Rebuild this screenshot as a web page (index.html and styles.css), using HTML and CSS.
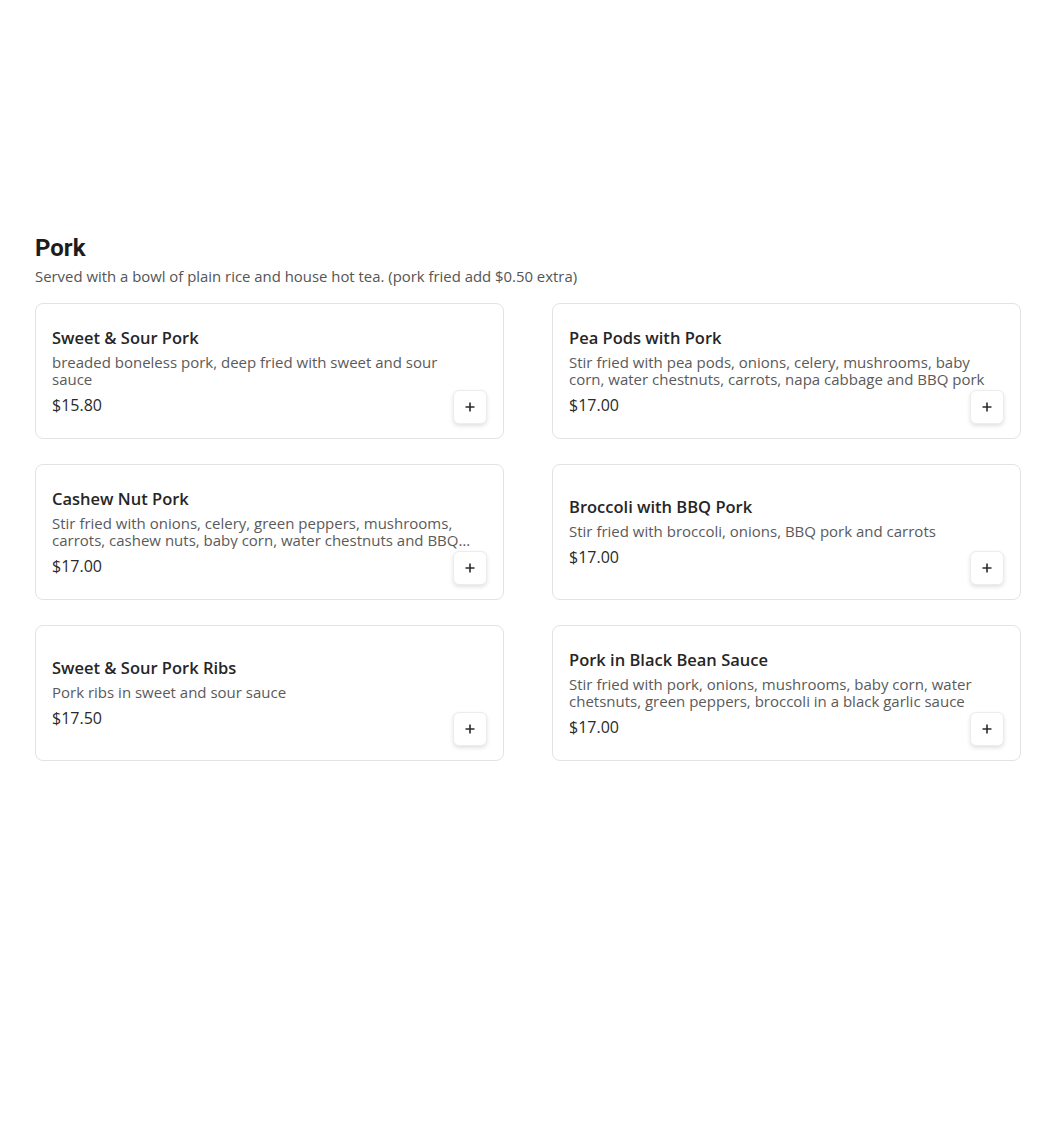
FILE: index.html
```html
<!DOCTYPE html>
<html>
<head>
<meta charset="utf-8">
<link rel="stylesheet" href="styles.css">
</head>
<body>
<section class="menu-section">
  <h2 class="section-title">Pork</h2>
  <p class="section-note">Served with a bowl of plain rice and house hot tea. (pork fried add $0.50 extra)</p>
  <div class="grid">
    <div class="card">
      <div class="item-name">Sweet &amp; Sour Pork</div>
      <div class="item-desc">breaded boneless pork, deep fried with sweet and sour sauce</div>
      <div class="item-price">$15.80</div>
      <button class="add-btn"><svg width="12" height="12" viewBox="0 0 12 12"><path d="M6 1.5v9M1.5 6h9" stroke="#2b2b2b" stroke-width="1.6" fill="none"/></svg></button>
    </div>
    <div class="card">
      <div class="item-name">Pea Pods with Pork</div>
      <div class="item-desc">Stir fried with pea pods, onions, celery, mushrooms, baby corn, water chestnuts, carrots, napa cabbage and BBQ pork</div>
      <div class="item-price">$17.00</div>
      <button class="add-btn"><svg width="12" height="12" viewBox="0 0 12 12"><path d="M6 1.5v9M1.5 6h9" stroke="#2b2b2b" stroke-width="1.6" fill="none"/></svg></button>
    </div>
    <div class="card">
      <div class="item-name">Cashew Nut Pork</div>
      <div class="item-desc clamp">Stir fried with onions, celery, green peppers, mushrooms, carrots, cashew nuts, baby corn, water chestnuts and BBQ pork</div>
      <div class="item-price">$17.00</div>
      <button class="add-btn"><svg width="12" height="12" viewBox="0 0 12 12"><path d="M6 1.5v9M1.5 6h9" stroke="#2b2b2b" stroke-width="1.6" fill="none"/></svg></button>
    </div>
    <div class="card">
      <div class="item-name">Broccoli with BBQ Pork</div>
      <div class="item-desc">Stir fried with broccoli, onions, BBQ pork and carrots</div>
      <div class="item-price">$17.00</div>
      <button class="add-btn"><svg width="12" height="12" viewBox="0 0 12 12"><path d="M6 1.5v9M1.5 6h9" stroke="#2b2b2b" stroke-width="1.6" fill="none"/></svg></button>
    </div>
    <div class="card">
      <div class="item-name">Sweet &amp; Sour Pork Ribs</div>
      <div class="item-desc">Pork ribs in sweet and sour sauce</div>
      <div class="item-price">$17.50</div>
      <button class="add-btn"><svg width="12" height="12" viewBox="0 0 12 12"><path d="M6 1.5v9M1.5 6h9" stroke="#2b2b2b" stroke-width="1.6" fill="none"/></svg></button>
    </div>
    <div class="card">
      <div class="item-name">Pork in Black Bean Sauce</div>
      <div class="item-desc">Stir fried with pork, onions, mushrooms, baby corn, water chetsnuts, green peppers, broccoli in a black garlic sauce</div>
      <div class="item-price">$17.00</div>
      <button class="add-btn"><svg width="12" height="12" viewBox="0 0 12 12"><path d="M6 1.5v9M1.5 6h9" stroke="#2b2b2b" stroke-width="1.6" fill="none"/></svg></button>
    </div>
  </div>
</section>
</body>
</html>
```

FILE: styles.css
```css
html, body {
  margin: 0;
  padding: 0;
  background: #ffffff;
}

.menu-section {
  width: 986px;
  margin-left: 35px;
  padding-top: 233px;
}

.section-title {
  margin: 0;
  font-family: Roboto, "Liberation Sans", sans-serif;
  font-weight: 700;
  font-size: 24px;
  line-height: 30px;
  color: #1c1c1c;
}

.section-note {
  margin: 3px 0 0;
  font-family: "Open Sans", "Liberation Sans", sans-serif;
  font-size: 14.9px;
  line-height: 20px;
  color: #555555;
}

.grid {
  margin-top: 17px;
  display: grid;
  grid-template-columns: 469px 469px;
  column-gap: 48px;
  row-gap: 25px;
}

.card {
  position: relative;
  box-sizing: border-box;
  height: 136px;
  border: 1px solid #e3e3e3;
  border-radius: 8px;
  padding: 0 16px;
  display: flex;
  flex-direction: column;
  justify-content: center;
  font-family: "Open Sans", "Liberation Sans", sans-serif;
}

.item-name {
  font-size: 16.5px;
  line-height: 22px;
  font-weight: 600;
  color: #262626;
}

.item-desc {
  margin-top: 5px;
  max-width: 420px;
  font-size: 15px;
  line-height: 17px;
  color: #5a5a5a;
}

.item-desc.clamp {
  display: -webkit-box;
  -webkit-line-clamp: 2;
  -webkit-box-orient: vertical;
  overflow: hidden;
}

.item-price {
  margin-top: 6px;
  font-size: 16px;
  line-height: 22px;
  color: #2a2a2a;
}

.add-btn {
  position: absolute;
  right: 16px;
  bottom: 14px;
  width: 34px;
  height: 34px;
  padding: 0;
  border: 1px solid #ececec;
  border-radius: 6px;
  background: #ffffff;
  box-shadow: 0 2px 4px rgba(0, 0, 0, 0.12);
  display: flex;
  align-items: center;
  justify-content: center;
}

.add-btn svg {
  display: block;
}
```
